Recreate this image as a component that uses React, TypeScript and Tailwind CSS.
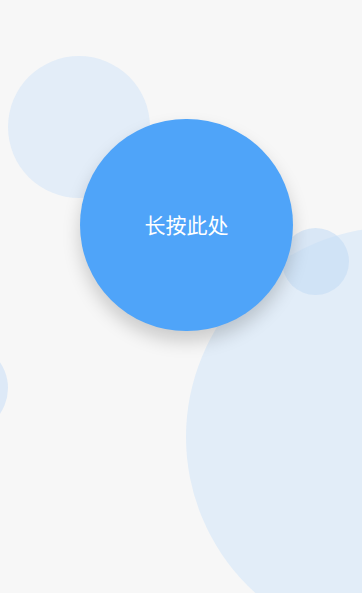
export default function App() {
  return (
    <div
      className="relative h-[593px] w-full overflow-hidden bg-[#f7f7f7]"
      style={{ fontFamily: '"Noto Sans CJK SC", "Noto Sans", sans-serif' }}
    >
      {/* background bubbles */}
      <div className="absolute left-[8px] top-[56px] h-[142px] w-[142px] rounded-full bg-[#e3edf8]" />
      <div className="absolute left-[186px] top-[227px] h-[420px] w-[420px] rounded-full bg-[#e2edf8]" />
      <div className="absolute left-[282px] top-[228px] h-[67px] w-[67px] rounded-full bg-[#c4dcf5]/60" />
      <div className="absolute left-[-82px] top-[343px] h-[90px] w-[90px] rounded-full bg-[#dde9f7]" />

      <div className="relative pl-[80px] pt-[119px]">
        <button className="flex h-[212px] w-[213px] items-center justify-center rounded-full bg-[#4fa4f9] pb-[1px] text-[21px] text-white shadow-[0_10px_18px_rgba(0,0,0,0.18)]">
          长按此处
        </button>
      </div>
    </div>
  );
}
